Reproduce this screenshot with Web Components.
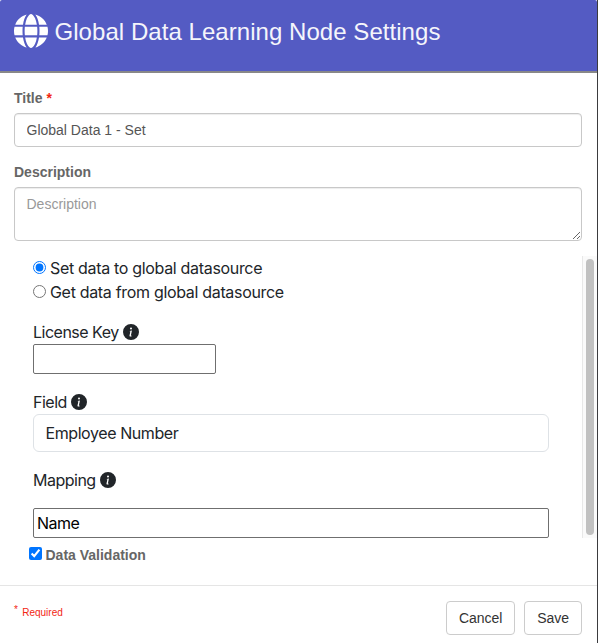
<!DOCTYPE html>
<html lang="en">
<head>
<meta charset="utf-8">
<title>Global Data Learning Node Settings</title>
<style>
  html, body {
    margin: 0;
    height: 100%;
    overflow: hidden;
    background: #3b3b3e;
  }
  body {
    font-family: "Liberation Sans", Arial, sans-serif;
    font-size: 14px;
    color: #555;
  }
</style>
</head>
<body>
<node-settings></node-settings>

<script>
// Create a template from markup
function html(markup) {
  const template = document.createElement("template");
  template.innerHTML = markup;
  return template;
}

class BaseElement extends HTMLElement {
  constructor() {
    super();
    this.attachShadow({ mode: "open" });
    this.shadowRoot.appendChild(this.constructor.template.content.cloneNode(true));
  }
}

class GlobeIcon extends BaseElement {
  static template = html(`
<style>
:host { display: block; width: 34px; height: 34px; }
svg { display: block; }
</style>
<svg width="34" height="34" viewBox="0 0 512 512" fill="#fff">
  <path d="M352 256c0 22.2-1.2 43.6-3.3 64H163.3c-2.2-20.4-3.3-41.8-3.3-64s1.2-43.6 3.3-64H348.7c2.2 20.4 3.3 41.8 3.3 64zm28.8-64H503.9c5.3 20.5 8.1 41.9 8.1 64s-2.8 43.5-8.1 64H380.8c2.1-20.6 3.2-42 3.2-64s-1.1-43.4-3.2-64zm112.6-32H376.7c-10-63.9-29.8-117.4-55.3-151.6c78.3 20.7 142 77.5 171.9 151.6zm-149.1 0H167.7c6.1-36.4 15.5-68.6 27-94.7c10.5-23.6 22.2-40.7 33.5-51.5C239.4 3.2 248.7 0 256 0s16.6 3.2 27.8 13.8c11.3 10.8 23 27.9 33.5 51.5c11.6 26 20.9 58.2 27 94.7zm-209 0H18.6C48.6 85.9 112.2 29.1 190.6 8.4C165.1 42.6 145.3 96.1 135.3 160zM8.1 192H131.2c-2.1 20.6-3.2 42-3.2 64s1.1 43.4 3.2 64H8.1C2.8 299.5 0 278.1 0 256s2.8-43.5 8.1-64zM194.7 446.6c-11.6-26-20.9-58.2-27-94.6H344.3c-6.1 36.4-15.5 68.6-27 94.6c-10.5 23.6-22.2 40.7-33.5 51.5C272.6 508.8 263.3 512 256 512s-16.6-3.2-27.8-13.8c-11.3-10.8-23-27.9-33.5-51.5zM135.3 352c10 63.9 29.8 117.4 55.3 151.6C112.2 482.9 48.6 426.1 18.6 352H135.3zm358.1 0c-30 74.1-93.6 130.9-171.9 151.6c25.5-34.2 45.2-87.7 55.3-151.6H493.4z"/>
</svg>
`);
}
customElements.define("globe-icon", GlobeIcon);

class InfoIcon extends BaseElement {
  static template = html(`
<style>
:host { display: block; width: 16px; height: 16px; color: #212529; }
svg { display: block; }
</style>
<svg width="16" height="16" viewBox="0 0 16 16" fill="currentColor">
  <path d="M8 16A8 8 0 1 0 8 0a8 8 0 0 0 0 16zm.93-9.412-1 4.705c-.07.34.029.533.304.533.194 0 .487-.07.686-.246l-.088.416c-.287.346-.92.598-1.465.598-.703 0-1.002-.422-.808-1.319l.738-3.468c.064-.293.006-.399-.287-.47l-.451-.081.082-.381 2.29-.287zM8 5.5a1 1 0 1 1 0-2 1 1 0 0 1 0 2z"/>
</svg>
`);
}
customElements.define("info-icon", InfoIcon);

class DialogHeader extends BaseElement {
  static template = html(`
<style>
:host {
  display: flex;
  box-sizing: border-box;
  height: 73px;
  padding: 14px 14px 0;
  gap: 6.5px;
  background: #545bc3;
  border-bottom: 2px solid #888;
  border-radius: 2px 2px 0 0;
}
h4 {
  margin: 0;
  font-size: 24px;
  font-weight: 400;
  line-height: 36px;
  letter-spacing: 0.05px;
  color: #f5f5fb;
  white-space: nowrap;
}
</style>
<globe-icon></globe-icon>
<h4><slot></slot></h4>
`);
}
customElements.define("dialog-header", DialogHeader);

// Bold label above a full-width control
class FormField extends BaseElement {
  static template = html(`
<style>
:host { display: block; }
label {
  display: block;
  height: 20px;
  margin-bottom: 5px;
  font-weight: 700;
  line-height: 20px;
  color: #666;
}
.required { color: #f22613; }
:host(:not([required])) .required { display: none; }
::slotted(input), ::slotted(textarea) {
  display: block;
  box-sizing: border-box;
  width: 100%;
  margin: 0;
  padding: 6px 11.5px;
  border: 1px solid #c8c8c8;
  border-radius: 4px;
  background: #fff;
  box-shadow: inset 0 1px 1px rgba(0, 0, 0, .075);
  font: inherit;
  line-height: 20px;
  color: #555;
}
</style>
<label><slot name="label"></slot> <span class="required">*</span></label>
<slot></slot>
`);
}
customElements.define("form-field", FormField);

class InfoLabel extends BaseElement {
  static template = html(`
<style>
:host { display: flex; align-items: center; gap: 4px; height: 24px; }
</style>
<span><slot></slot></span><info-icon></info-icon>
`);
}
customElements.define("info-label", InfoLabel);

class RadioOption extends BaseElement {
  static template = html(`
<style>
:host { display: block; }
label { display: flex; align-items: center; gap: 4px; height: 24px; }
input { width: 13px; height: 13px; margin: 0 0 2px; }
</style>
<label><input type="radio"><span><slot></slot></span></label>
`);

  connectedCallback() {
    this.shadowRoot.querySelector("input").checked = this.hasAttribute("checked");
  }
}
customElements.define("radio-option", RadioOption);

class DatasourceForm extends BaseElement {
  static template = html(`
<style>
:host {
  display: flex;
  height: 282px;
  font-family: Inter, "Liberation Sans", sans-serif;
  font-size: 16px;
  line-height: 24px;
  letter-spacing: -0.32px;
  color: #212529;
}
.content { flex: 1; padding: 0 33px; overflow: hidden; }
.group { margin-top: 16px; }
info-label { letter-spacing: -0.5px; }
.field { margin-top: 16px; }
input {
  display: block;
  box-sizing: border-box;
  height: 30px;
  padding: 1px 3px;
  border: 1px solid #6f6f6f;
  border-radius: 2px;
  background: #fff;
  font: inherit;
  letter-spacing: -0.5px;
  color: #000;
}
.key { width: 183px; }
.name { width: 100%; margin-top: 16px; }
.select {
  box-sizing: border-box;
  height: 38px;
  padding: 6px 11.5px;
  border: 1px solid #dee2e6;
  border-radius: 6px;
  letter-spacing: -0.42px;
}
.track {
  box-sizing: border-box;
  width: 15px;
  padding: 3px 2px 3px 3px;
  border-left: 1px solid #e8e8e8;
  background: #fafafa;
}
.thumb { width: 8px; height: 276px; border-radius: 4px; background: #c1c1c1; }
</style>
<div class="content">
  <radio-option checked>Set data to global datasource</radio-option>
  <radio-option>Get data from global datasource</radio-option>
  <div class="group">
    <info-label>License Key</info-label>
    <input class="key" type="text">
  </div>
  <div class="field">
    <info-label>Field</info-label>
    <div class="select">Employee Number</div>
  </div>
  <div class="field">
    <info-label>Mapping</info-label>
    <input class="name" type="text" value="Name">
  </div>
</div>
<div class="track"><div class="thumb"></div></div>
`);
}
customElements.define("datasource-form", DatasourceForm);

class DialogButton extends BaseElement {
  static template = html(`
<style>
:host { display: block; }
button {
  display: block;
  height: 34px;
  padding: 0 12px;
  border: 1px solid #ccc;
  border-radius: 4px;
  background: #fff;
  font: inherit;
  line-height: 20px;
  letter-spacing: -0.04px;
  color: #333;
}
</style>
<button type="button"><slot></slot></button>
`);
}
customElements.define("dialog-button", DialogButton);

class DialogFooter extends BaseElement {
  static template = html(`
<style>
:host {
  display: flex;
  box-sizing: border-box;
  height: 58px;
  padding: 15px 15px 0 14px;
  border-top: 1px solid #e5e5e5;
}
.note { flex: 1; padding-top: 5px; font-size: 10px; line-height: 14px; color: #f22613; }
.note sup { font-size: 10px; line-height: 0; vertical-align: 3px; }
.note span { margin-left: 1.5px; }
.buttons { display: flex; gap: 9px; }
</style>
<div class="note"><sup>*</sup> <span>Required</span></div>
<div class="buttons"><slot></slot></div>
`);
}
customElements.define("dialog-footer", DialogFooter);

class NodeSettings extends BaseElement {
  static template = html(`
<style>
:host { display: flex; flex-direction: column; width: 597px; height: 643px; background: #fff; }
.fields { padding: 15px 15px 15px 14px; }
form-field + form-field { margin-top: 15px; }
input { height: 34px; }
textarea { height: 54px; resize: vertical; overflow: hidden; }
textarea::placeholder { color: #999; }
.validation {
  display: flex;
  flex: 1;
  gap: 3.5px;
  padding: 7px 0 0 29px;
  font-weight: 700;
  line-height: 20px;
  color: #666;
}
.validation input { width: 13px; height: 13px; margin: 2px 0 0; }
</style>
<dialog-header>Global Data Learning Node Settings</dialog-header>
<div class="fields">
  <form-field required>
    <span slot="label">Title</span>
    <input type="text" value="Global Data 1 - Set">
  </form-field>
  <form-field>
    <span slot="label">Description</span>
    <textarea placeholder="Description"></textarea>
  </form-field>
</div>
<datasource-form></datasource-form>
<label class="validation"><input type="checkbox" checked>Data Validation</label>
<dialog-footer>
  <dialog-button>Cancel</dialog-button>
  <dialog-button>Save</dialog-button>
</dialog-footer>
`);
}
customElements.define("node-settings", NodeSettings);
</script>
</body>
</html>
